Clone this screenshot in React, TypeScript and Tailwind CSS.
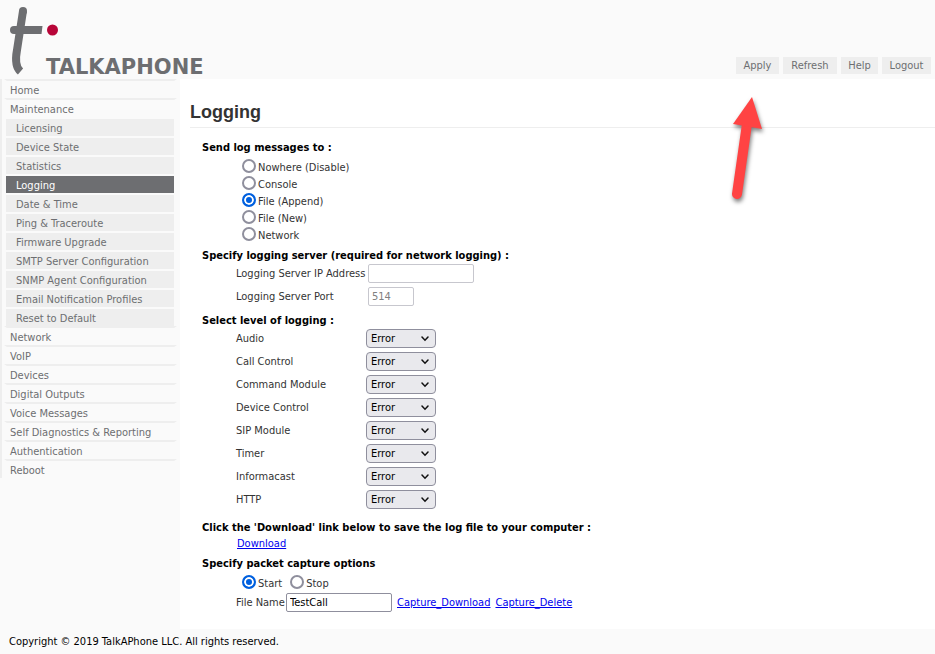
import { useState } from 'react';

const subPages = [
  'Licensing',
  'Device State',
  'Statistics',
  'Logging',
  'Date & Time',
  'Ping & Traceroute',
  'Firmware Upgrade',
  'SMTP Server Configuration',
  'SNMP Agent Configuration',
  'Email Notification Profiles',
  'Reset to Default',
];

const otherPages = [
  'Network',
  'VoIP',
  'Devices',
  'Digital Outputs',
  'Voice Messages',
  'Self Diagnostics & Reporting',
  'Authentication',
  'Reboot',
];

const targets = ['Nowhere (Disable)', 'Console', 'File (Append)', 'File (New)', 'Network'];

const modules = [
  'Audio',
  'Call Control',
  'Command Module',
  'Device Control',
  'SIP Module',
  'Timer',
  'Informacast',
  'HTTP',
];

const levels = ['Error', 'Warning', 'Info', 'Debug'];

function Logo() {
  return (
    <div className="flex items-end">
      <svg width="60" height="79" viewBox="0 0 60 79" fill="none" aria-hidden="true">
        <path d="M23 11 L17 50 Q14 66 20.5 71.5" stroke="#6d6e71" strokeWidth="8" />
        <circle cx="23" cy="11" r="4" fill="#6d6e71" />
        <path d="M14 26 H42.5 L41.5 34 H14 A4 4 0 0 1 14 26 Z" fill="#6d6e71" />
        <circle cx="52.5" cy="30" r="5.5" fill="#b70538" />
      </svg>
      <span className="-ml-[14px] pb-[2px] font-['DejaVu_Sans'] text-[21px] leading-5 font-bold text-[#6d6e71]">
        TALKAPHONE
      </span>
    </div>
  );
}

function Pointer() {
  return (
    <svg
      className="pointer-events-none absolute top-[34px] -left-[16px] z-10"
      width="60"
      height="120"
      viewBox="0 0 60 120"
      aria-hidden="true"
    >
      <g className="drop-shadow-[1px_3px_2px_rgba(0,0,0,0.5)]">
        <path d="M27 33 L17 103" stroke="#ff4343" strokeWidth="10" strokeLinecap="round" />
        <path d="M32 6 L13 33 L42 38 Z" fill="#ff4343" />
      </g>
    </svg>
  );
}

function MenuItem({ label }: { label: string }) {
  return (
    <li className="h-[19px] border-x-[3px] border-t-2 border-x-transparent border-t-[#eeeeee] pl-[3px]">
      <a href="#" className="block h-[17px] leading-[19px]">
        {label}
      </a>
    </li>
  );
}

interface RadioProps {
  name: string;
  label: string;
  checked: boolean;
  onChange: () => void;
}

function Radio({ name, label, checked, onChange }: RadioProps) {
  return (
    <label className="flex h-[17px] items-start gap-[2px] leading-[19px]">
      <input
        type="radio"
        name={name}
        checked={checked}
        onChange={onChange}
        className="mt-px size-[14px] appearance-none rounded-full border-2 border-[#8f8f9d] bg-white checked:border-[#0060df] checked:bg-[#0060df] checked:shadow-[inset_0_0_0_2px_white]"
      />
      {label}
    </label>
  );
}

function LevelSelect({ name }: { name: string }) {
  const id = 'level-' + name;
  return (
    <div className="flex h-[23px] items-center pl-[46px]">
      <label htmlFor={id} className="w-[130px]">
        {name}
      </label>
      <div className="relative">
        <select
          id={id}
          defaultValue="Error"
          className="block h-[19px] w-[70px] appearance-none rounded-[4px] border border-[#8f8f9d] bg-[#e9e9ed] pl-1 leading-[17px] text-black"
        >
          {levels.map(level => (
            <option key={level}>{level}</option>
          ))}
        </select>
        <svg
          className="pointer-events-none absolute top-[7px] right-[7px]"
          width="8"
          height="6"
          viewBox="0 0 8 6"
          fill="none"
          aria-hidden="true"
        >
          <path d="M1 1 L4 4.2 L7 1" stroke="#111" strokeWidth="1.5" strokeLinecap="round" />
        </svg>
      </div>
    </div>
  );
}

function Heading({ children }: { children: React.ReactNode }) {
  return <h2 className="h-[15px] leading-[17px] font-bold text-black">{children}</h2>;
}

export default function App() {
  const [target, setTarget] = useState('File (Append)');
  const [capture, setCapture] = useState('Start');
  const [fileName, setFileName] = useState('TestCall');

  return (
    <div className="flex min-h-screen flex-col bg-[#fafafa] font-['DejaVu_Sans_Condensed','DejaVu_Sans',sans-serif] text-[11px] leading-[17px] text-[#333333]">
      <header className="flex h-[79px] items-end justify-between">
        <Logo />
        <nav className="flex gap-1 pr-1 pb-[5px] text-[#6d6e71]">
          <div className="relative">
            <button className="h-[17px] w-[43px] bg-[#eeeeee]">Apply</button>
            <Pointer />
          </div>
          <button className="h-[17px] w-[54px] bg-[#eeeeee]">Refresh</button>
          <button className="h-[17px] w-[37px] bg-[#eeeeee]">Help</button>
          <button className="h-[17px] w-[49px] bg-[#eeeeee]">Logout</button>
        </nav>
      </header>

      <div className="flex flex-1">
        <aside className="w-[180px] shrink-0 text-[#6d6e71]">
          <ul className="border-l-2 border-[#eeeeee] pr-[3px] pl-[2px]">
            <MenuItem label="Home" />
            <MenuItem label="Maintenance" />
            {subPages.map(page => (
              <li key={page} className="pt-[2px] pr-[3px] pl-[2px]">
                <a
                  href="#"
                  className={
                    page === 'Logging'
                      ? 'block h-[17px] bg-[#6d6e71] pl-[10px] leading-[19px] text-white'
                      : 'block h-[17px] bg-[#eeeeee] pl-[10px] leading-[19px]'
                  }
                >
                  {page}
                </a>
              </li>
            ))}
            {otherPages.map(page => (
              <MenuItem key={page} label={page} />
            ))}
          </ul>
        </aside>

        <main className="flex-1 bg-white pl-[10px]">
          <h1 className="border-b border-[#eeeeee] pt-[21px] pb-[3px] font-['Liberation_Sans',sans-serif] text-[18px] leading-6 font-bold">
            Logging
          </h1>

          <form className="pt-[11px] pl-3" onSubmit={e => e.preventDefault()}>
            <Heading>Send log messages to :</Heading>
            <div className="pt-1 pl-10">
              {targets.map(item => (
                <Radio
                  key={item}
                  name="target"
                  label={item}
                  checked={target === item}
                  onChange={() => setTarget(item)}
                />
              ))}
            </div>

            <div className="pt-1">
              <Heading>Specify logging server (required for network logging) :</Heading>
              <div className="flex h-[23px] items-center pl-[34px]">
                <label htmlFor="server-ip" className="w-[132px] whitespace-nowrap">
                  Logging Server IP Address
                </label>
                <input
                  id="server-ip"
                  disabled
                  className="h-[19px] w-[106px] rounded-[2px] border border-[#c7c7ce] bg-white px-[3px]"
                />
              </div>
              <div className="flex h-[23px] items-center pl-[34px]">
                <label htmlFor="server-port" className="w-[132px]">
                  Logging Server Port
                </label>
                <input
                  id="server-port"
                  disabled
                  defaultValue="514"
                  className="h-[19px] w-[46px] rounded-[2px] border border-[#c7c7ce] bg-white px-[3px] text-[#808080]"
                />
              </div>
            </div>

            <div className="pt-1">
              <Heading>Select level of logging :</Heading>
              <div className="-ml-3">
                {modules.map(name => (
                  <LevelSelect key={name} name={name} />
                ))}
              </div>
            </div>

            <div className="pt-2">
              <Heading>Click the 'Download' link below to save the log file to your computer :</Heading>
              <a
                href="#"
                className="ml-[35px] block h-[18px] w-fit leading-5 text-[#0000ee] underline"
              >
                Download
              </a>
            </div>

            <div className="pt-[3px]">
              <Heading>Specify packet capture options</Heading>
              <div className="flex gap-2 pt-1 pb-[2px] pl-10">
                <Radio
                  name="capture"
                  label="Start"
                  checked={capture === 'Start'}
                  onChange={() => setCapture('Start')}
                />
                <Radio
                  name="capture"
                  label="Stop"
                  checked={capture === 'Stop'}
                  onChange={() => setCapture('Stop')}
                />
              </div>
              <div className="flex h-[19px] items-center pl-[34px]">
                <label htmlFor="file-name" className="w-[50px] whitespace-nowrap">
                  File Name
                </label>
                <input
                  id="file-name"
                  value={fileName}
                  onChange={e => setFileName(e.target.value)}
                  className="h-[19px] w-[106px] rounded-[2px] border border-[#8f8f9d] bg-white px-[3px] text-black"
                />
                <a href="#" className="ml-[5px] text-[#0000ee] underline">
                  Capture_Download
                </a>
                <a href="#" className="ml-[5px] text-[#0000ee] underline">
                  Capture_Delete
                </a>
              </div>
            </div>
          </form>
        </main>
      </div>

      <footer className="h-[25px] pl-[9px] leading-[25px] text-black">
        Copyright © 2019 TalkAPhone LLC. All rights reserved.
      </footer>
    </div>
  );
}
